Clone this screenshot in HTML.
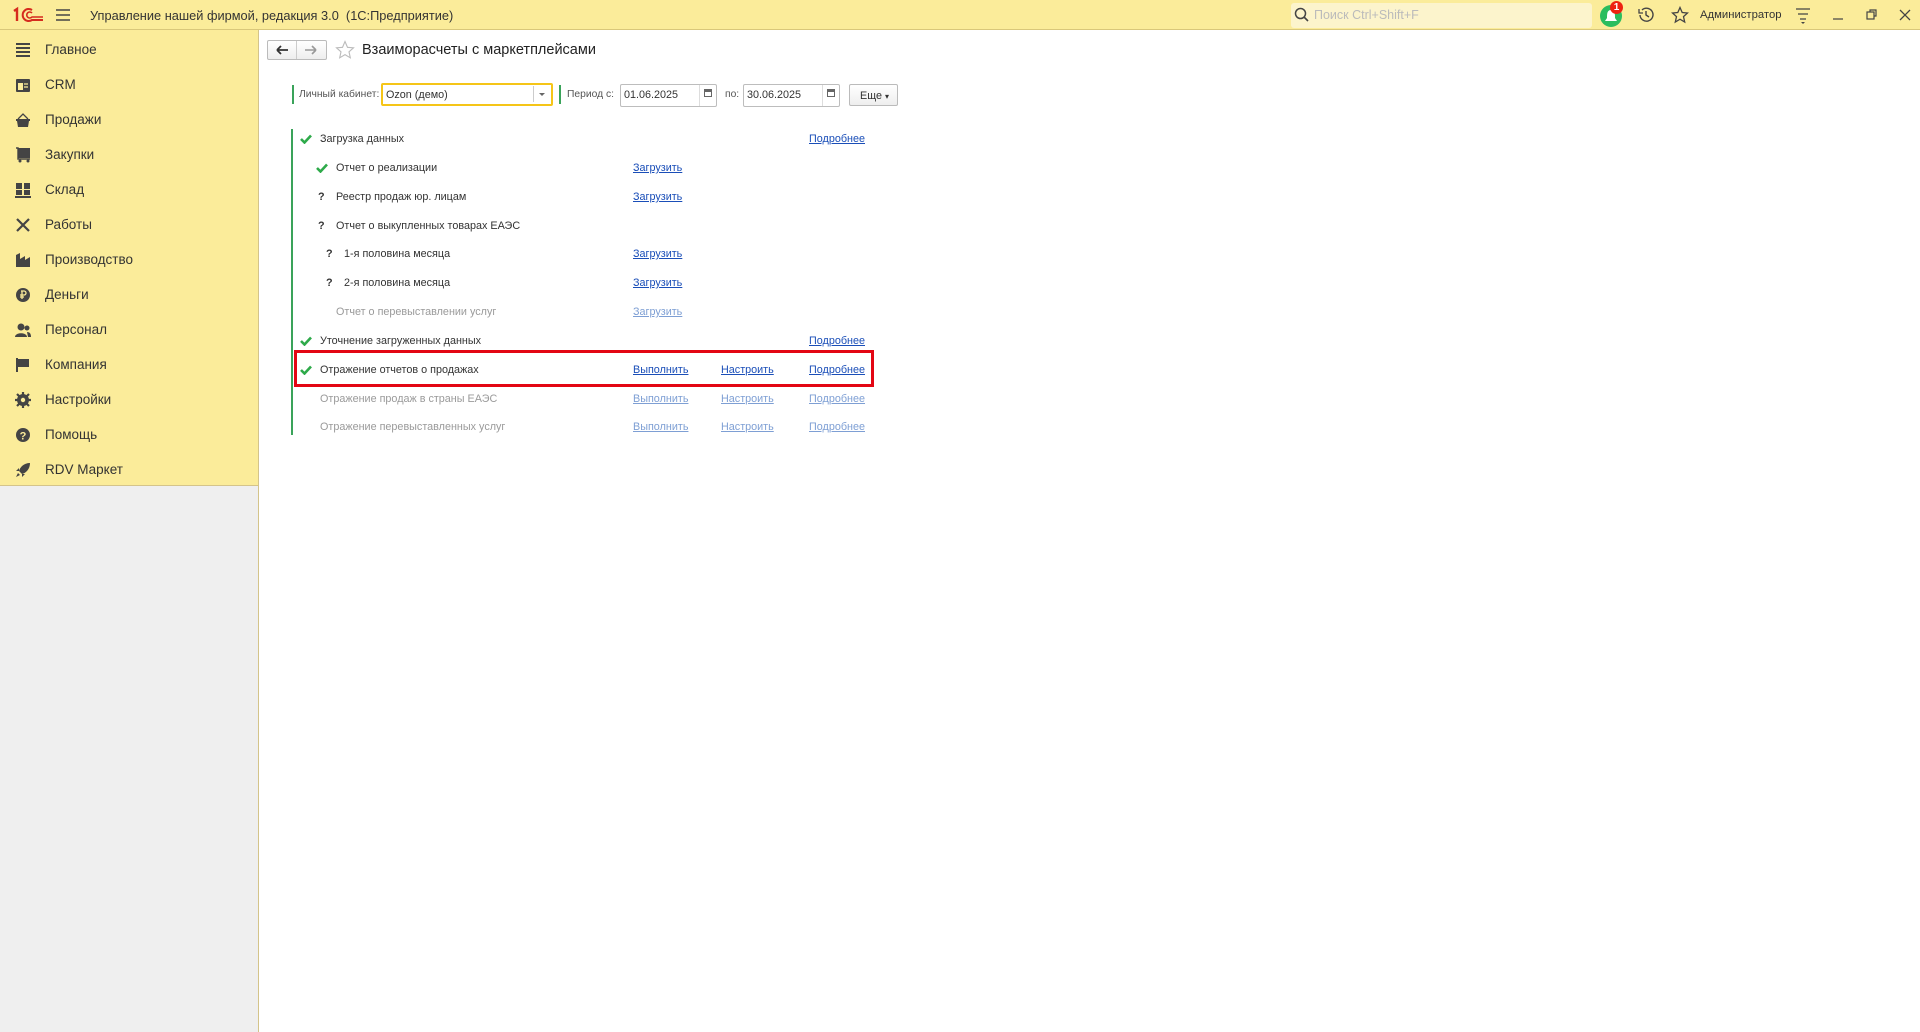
<!DOCTYPE html>
<html><head><meta charset="utf-8">
<style>
*{box-sizing:border-box;margin:0;padding:0}
body{width:1920px;height:1032px;overflow:hidden;background:#fff;font-family:"Liberation Sans",Arial,sans-serif;color:#333;position:relative}
.top{position:absolute;left:0;top:0;width:1920px;height:30px;background:#fbec9a;border-bottom:1px solid #d9c77a}
.side{position:absolute;left:0;top:30px;width:259px;height:1002px;background:#efefef;border-right:1px solid #d4c48a}
.sideY{position:absolute;left:0;top:0;width:258px;height:456px;background:#fbec9a;border-bottom:1px solid #d4c48a}
.si{position:absolute;left:0;height:35px;width:258px;font-size:13.5px;color:#333}
.si span{position:absolute;left:45px;top:9px}
.si svg{position:absolute;left:15px;top:9px}
.abs{position:absolute}
.t12{font-size:10.8px;color:#333;white-space:nowrap}
.g{color:#9a9a9a}
a{color:#1a4eb8;text-decoration:underline;font-size:10.8px;position:absolute;white-space:nowrap}
a.d{color:#7e9fd4}
.inp{position:absolute;background:#fff;border:1px solid #bdbdbd;border-radius:2px;font-size:10.8px;padding:4px 3px;height:23px}
.chk{position:absolute;width:12px;height:10px}
</style></head><body>
<div class="top">
 <svg class="abs" style="left:12px;top:6px" width="32" height="18" viewBox="0 0 32 18"><path d="M2 5 L5 3 V15" stroke="#d52b1e" stroke-width="2.4" fill="none"/><path d="M20 4 A6 6 0 1 0 20 14 H31" stroke="#d52b1e" stroke-width="2" fill="none"/><path d="M20 7 A3 3 0 1 0 20 11 H31" stroke="#d52b1e" stroke-width="1.6" fill="none"/></svg>
 <svg class="abs" style="left:55px;top:8px" width="16" height="14"><path d="M1 2H15M1 7H15M1 12H15" stroke="#444" stroke-width="1.4"/></svg>
 <div class="abs" style="left:90px;top:8px;font-size:12.8px;color:#333">Управление нашей фирмой, редакция 3.0&nbsp; (1С:Предприятие)</div>
 <div class="abs" style="left:1291px;top:3px;width:301px;height:25px;background:#fcf4cc;border-radius:3px"></div>
 <svg class="abs" style="left:1294px;top:7px" width="16" height="16"><circle cx="6.5" cy="6.5" r="5" stroke="#444" stroke-width="1.5" fill="none"/><path d="M10 10L14 14" stroke="#444" stroke-width="1.6"/></svg>
 <div class="abs" style="left:1314px;top:8px;font-size:12.5px;color:#bbb">Поиск Ctrl+Shift+F</div>
 <div class="abs" style="left:1600px;top:5px;width:22px;height:22px;border-radius:50%;background:#2bbd5e"></div>
 <svg class="abs" style="left:1604px;top:8px" width="14" height="16"><path d="M7 2 C3 2 3 6 3 10 L1 13 H13 L11 10 C11 6 11 2 7 2Z" fill="#fff"/></svg>
 <div class="abs" style="left:1610px;top:1px;width:13px;height:13px;border-radius:50%;background:#e21;color:#fff;font-size:10px;font-weight:bold;text-align:center;line-height:13px">1</div>
 <svg class="abs" style="left:1637px;top:6px" width="18" height="18"><path d="M3 9 A6.5 6.5 0 1 0 5 4" stroke="#444" stroke-width="1.4" fill="none"/><path d="M2 3V7H6" stroke="#444" stroke-width="1.3" fill="none"/><path d="M9 5V9L12 11" stroke="#444" stroke-width="1.4" fill="none"/></svg>
 <svg class="abs" style="left:1671px;top:6px" width="18" height="18"><path d="M9 1.5L11.2 6.5L16.5 7L12.5 10.6L13.7 16L9 13.2L4.3 16L5.5 10.6L1.5 7L6.8 6.5Z" stroke="#444" stroke-width="1.3" fill="none"/></svg>
 <div class="abs" style="left:1700px;top:9px;font-size:11.3px;color:#333">Администратор</div>
 <svg class="abs" style="left:1795px;top:7px" width="16" height="18"><path d="M1 2H15M3 7H13M5 12H11" stroke="#444" stroke-width="1.3"/><path d="M6 15H10L8 17Z" fill="#444"/></svg>
 <svg class="abs" style="left:1832px;top:8px" width="12" height="12"><path d="M1 11H11" stroke="#444" stroke-width="1.2"/></svg>
 <svg class="abs" style="left:1866px;top:9px" width="12" height="12"><rect x="1" y="3" width="7" height="7" stroke="#444" fill="none" stroke-width="1.2"/><path d="M4 3V1H10V7H8" stroke="#444" fill="none" stroke-width="1.2"/></svg>
 <svg class="abs" style="left:1899px;top:9px" width="12" height="12"><path d="M1 1L11 11M11 1L1 11" stroke="#444" stroke-width="1.3"/></svg>
</div>

<div class="side"><div class="sideY">
 <div class="si" style="top:3px"><svg width="16" height="16"><path d="M1 2H15M1 6H15M1 10H15M1 14H15" stroke="#444" stroke-width="2"/></svg><span>Главное</span></div>
 <div class="si" style="top:38px"><svg width="16" height="16"><rect x="1" y="2" width="14" height="13" rx="1" fill="#444"/><rect x="3" y="6" width="5" height="7" fill="#fbec9a"/><path d="M9 7H13M9 10H13" stroke="#fbec9a" stroke-width="1.2"/></svg><span>CRM</span></div>
 <div class="si" style="top:73px"><svg width="16" height="16"><path d="M3 7L8 2L13 7" stroke="#444" fill="none" stroke-width="1.3"/><rect x="1" y="7" width="14" height="2" fill="#444"/><path d="M2 9H14L13 15H3Z" fill="#444"/></svg><span>Продажи</span></div>
 <div class="si" style="top:108px"><svg width="16" height="16"><rect x="3" y="1" width="12" height="10" fill="#444"/><path d="M1 1H3V12H15" stroke="#444" stroke-width="1.4" fill="none"/><circle cx="5" cy="14" r="1.5" fill="#444"/><circle cx="13" cy="14" r="1.5" fill="#444"/></svg><span>Закупки</span></div>
 <div class="si" style="top:143px"><svg width="16" height="16"><rect x="1" y="1" width="6" height="6" fill="#444"/><rect x="9" y="1" width="6" height="6" fill="#444"/><rect x="1" y="8" width="6" height="5" fill="#444"/><rect x="9" y="8" width="6" height="5" fill="#444"/><rect x="0" y="14" width="16" height="2" fill="#444"/></svg><span>Склад</span></div>
 <div class="si" style="top:178px"><svg width="16" height="16"><path d="M2 14L14 2M2 2L14 14" stroke="#444" stroke-width="2.2"/></svg><span>Работы</span></div>
 <div class="si" style="top:213px"><svg width="16" height="16"><path d="M1 15V3L5 1V7L10 4V8L15 5V15Z" fill="#444"/></svg><span>Производство</span></div>
 <div class="si" style="top:248px"><svg width="16" height="16"><circle cx="8" cy="8" r="7" fill="#444"/><path d="M7 4V12M6 4H9A2 2 0 0 1 9 8H5M5 10H9" stroke="#fbec9a" stroke-width="1.3" fill="none"/></svg><span>Деньги</span></div>
 <div class="si" style="top:283px"><svg width="16" height="16"><circle cx="6" cy="5" r="3.5" fill="#444"/><path d="M0 15C0 10 12 10 12 15Z" fill="#444"/><circle cx="12" cy="6" r="2.5" fill="#444"/><path d="M12 10C15 10 16 12 16 15H13Z" fill="#444"/></svg><span>Персонал</span></div>
 <div class="si" style="top:318px"><svg width="16" height="16"><path d="M2 1V15" stroke="#444" stroke-width="2"/><path d="M3 2H14V10H3Z" fill="#444"/></svg><span>Компания</span></div>
 <div class="si" style="top:353px"><svg width="16" height="16"><circle cx="8" cy="8" r="4.5" stroke="#444" stroke-width="3" fill="none"/><path d="M8 0V16M0 8H16M2 2L14 14M14 2L2 14" stroke="#444" stroke-width="2.2"/><circle cx="8" cy="8" r="2.2" fill="#fbec9a"/></svg><span>Настройки</span></div>
 <div class="si" style="top:388px"><svg width="16" height="16"><circle cx="8" cy="8" r="7" fill="#444"/><text x="8" y="12.5" font-size="11" font-weight="bold" fill="#fbec9a" text-anchor="middle" font-family="Liberation Sans">?</text></svg><span>Помощь</span></div>
 <div class="si" style="top:423px"><svg width="16" height="16"><path d="M15 1C9 1 5 5 4 9L7 12C11 11 15 7 15 1Z" fill="#444"/><path d="M4 9L1 9L4 6ZM7 12L7 15L10 12Z" fill="#444"/><path d="M3 11L1 15L5 13Z" fill="#444"/></svg><span>RDV Маркет</span></div>
</div></div>

<!-- header -->
<div class="abs" style="left:267px;top:40px;width:60px;height:20px;border:1px solid #bbb;border-radius:2px;background:linear-gradient(#fff,#eee)"></div>
<div class="abs" style="left:296px;top:41px;width:1px;height:18px;background:#ccc"></div>
<svg class="abs" style="left:275px;top:44px" width="14" height="12"><path d="M2 6H13M2 6L6 2M2 6L6 10" stroke="#333" stroke-width="1.8" fill="none"/></svg>
<svg class="abs" style="left:304px;top:44px" width="14" height="12"><path d="M1 6H12M12 6L8 2M12 6L8 10" stroke="#999" stroke-width="1.6" fill="none"/></svg>
<svg class="abs" style="left:335px;top:40px" width="20" height="20"><path d="M10 1.5L12.5 7.3L18.5 7.8L14 11.8L15.3 17.8L10 14.6L4.7 17.8L6 11.8L1.5 7.8L7.5 7.3Z" stroke="#bbb" stroke-width="1.1" fill="none"/></svg>
<div class="abs" style="left:362px;top:42px;font-size:14.5px;color:#222">Взаиморасчеты с маркетплейсами</div>

<!-- filter -->
<div class="abs" style="left:292px;top:85px;width:2px;height:19px;background:#3aa35a"></div>
<div class="abs t12" style="left:299px;top:89px;color:#555;font-size:10.3px">Личный кабинет:</div>
<div class="inp" style="left:381px;top:83px;width:172px;border:2px solid #f5c518;height:23px;padding:4px 3px">Ozon (демо)</div>
<div class="abs" style="left:533px;top:86px;width:1px;height:16px;background:#ccc"></div>
<div class="abs" style="left:539px;top:93px;border-left:3px solid transparent;border-right:3px solid transparent;border-top:3px solid #666"></div>
<div class="abs" style="left:559px;top:85px;width:2px;height:19px;background:#3aa35a"></div>
<div class="abs t12" style="left:567px;top:89px;color:#555;font-size:10.3px">Период с:</div>
<div class="inp" style="left:620px;top:84px;width:97px">01.06.2025</div>
<div class="abs" style="left:699px;top:85px;width:1px;height:21px;background:#ddd"></div>
<div class="abs" style="left:704px;top:89px;width:8px;height:8px;border:1.5px solid #666;border-top-width:3px"></div>
<div class="abs t12" style="left:725px;top:89px;color:#555;font-size:10.3px">по:</div>
<div class="inp" style="left:743px;top:84px;width:97px">30.06.2025</div>
<div class="abs" style="left:822px;top:85px;width:1px;height:21px;background:#ddd"></div>
<div class="abs" style="left:827px;top:89px;width:8px;height:8px;border:1.5px solid #666;border-top-width:3px"></div>
<div class="abs" style="left:849px;top:84px;width:49px;height:22px;border:1px solid #bbb;border-radius:2px;background:linear-gradient(#fff,#eee);font-size:10.8px;padding:5px 0 0 10px">Еще <span style="font-size:8px">▾</span></div>

<!-- tree -->
<div class="abs" style="left:291px;top:129px;width:2px;height:306px;background:#3aa35a"></div>
<svg width="0" height="0" style="position:absolute"><defs><path id="ck" d="M1 5L4.5 8.5L11 1.5" stroke="#2eaa4a" stroke-width="2.6" fill="none"/></defs></svg>

<svg class="chk" style="left:300px;top:134px"><use href="#ck"/></svg>
<div class="abs t12" style="left:320px;top:133px">Загрузка данных</div>
<a style="left:809px;top:133px">Подробнее</a>

<svg class="chk" style="left:316px;top:163px"><use href="#ck"/></svg>
<div class="abs t12" style="left:336px;top:162px">Отчет о реализации</div>
<a style="left:633px;top:162px">Загрузить</a>

<div class="abs t12" style="left:318px;top:191px;font-weight:bold">?</div>
<div class="abs t12" style="left:336px;top:191px">Реестр продаж юр. лицам</div>
<a style="left:633px;top:191px">Загрузить</a>

<div class="abs t12" style="left:318px;top:220px;font-weight:bold">?</div>
<div class="abs t12" style="left:336px;top:220px">Отчет о выкупленных товарах ЕАЭС</div>

<div class="abs t12" style="left:326px;top:248px;font-weight:bold">?</div>
<div class="abs t12" style="left:344px;top:248px">1-я половина месяца</div>
<a style="left:633px;top:248px">Загрузить</a>

<div class="abs t12" style="left:326px;top:277px;font-weight:bold">?</div>
<div class="abs t12" style="left:344px;top:277px">2-я половина месяца</div>
<a style="left:633px;top:277px">Загрузить</a>

<div class="abs t12 g" style="left:336px;top:306px">Отчет о перевыставлении услуг</div>
<a class="d" style="left:633px;top:306px">Загрузить</a>

<svg class="chk" style="left:300px;top:336px"><use href="#ck"/></svg>
<div class="abs t12" style="left:320px;top:335px">Уточнение загруженных данных</div>
<a style="left:809px;top:335px">Подробнее</a>

<div class="abs" style="left:294px;top:350px;width:580px;height:37px;border:3px solid #e30613"></div>
<svg class="chk" style="left:300px;top:365px"><use href="#ck"/></svg>
<div class="abs t12" style="left:320px;top:364px">Отражение отчетов о продажах</div>
<a style="left:633px;top:364px">Выполнить</a>
<a style="left:721px;top:364px">Настроить</a>
<a style="left:809px;top:364px">Подробнее</a>

<div class="abs t12 g" style="left:320px;top:393px">Отражение продаж в страны ЕАЭС</div>
<a class="d" style="left:633px;top:393px">Выполнить</a>
<a class="d" style="left:721px;top:393px">Настроить</a>
<a class="d" style="left:809px;top:393px">Подробнее</a>

<div class="abs t12 g" style="left:320px;top:421px">Отражение перевыставленных услуг</div>
<a class="d" style="left:633px;top:421px">Выполнить</a>
<a class="d" style="left:721px;top:421px">Настроить</a>
<a class="d" style="left:809px;top:421px">Подробнее</a>
</body></html>
